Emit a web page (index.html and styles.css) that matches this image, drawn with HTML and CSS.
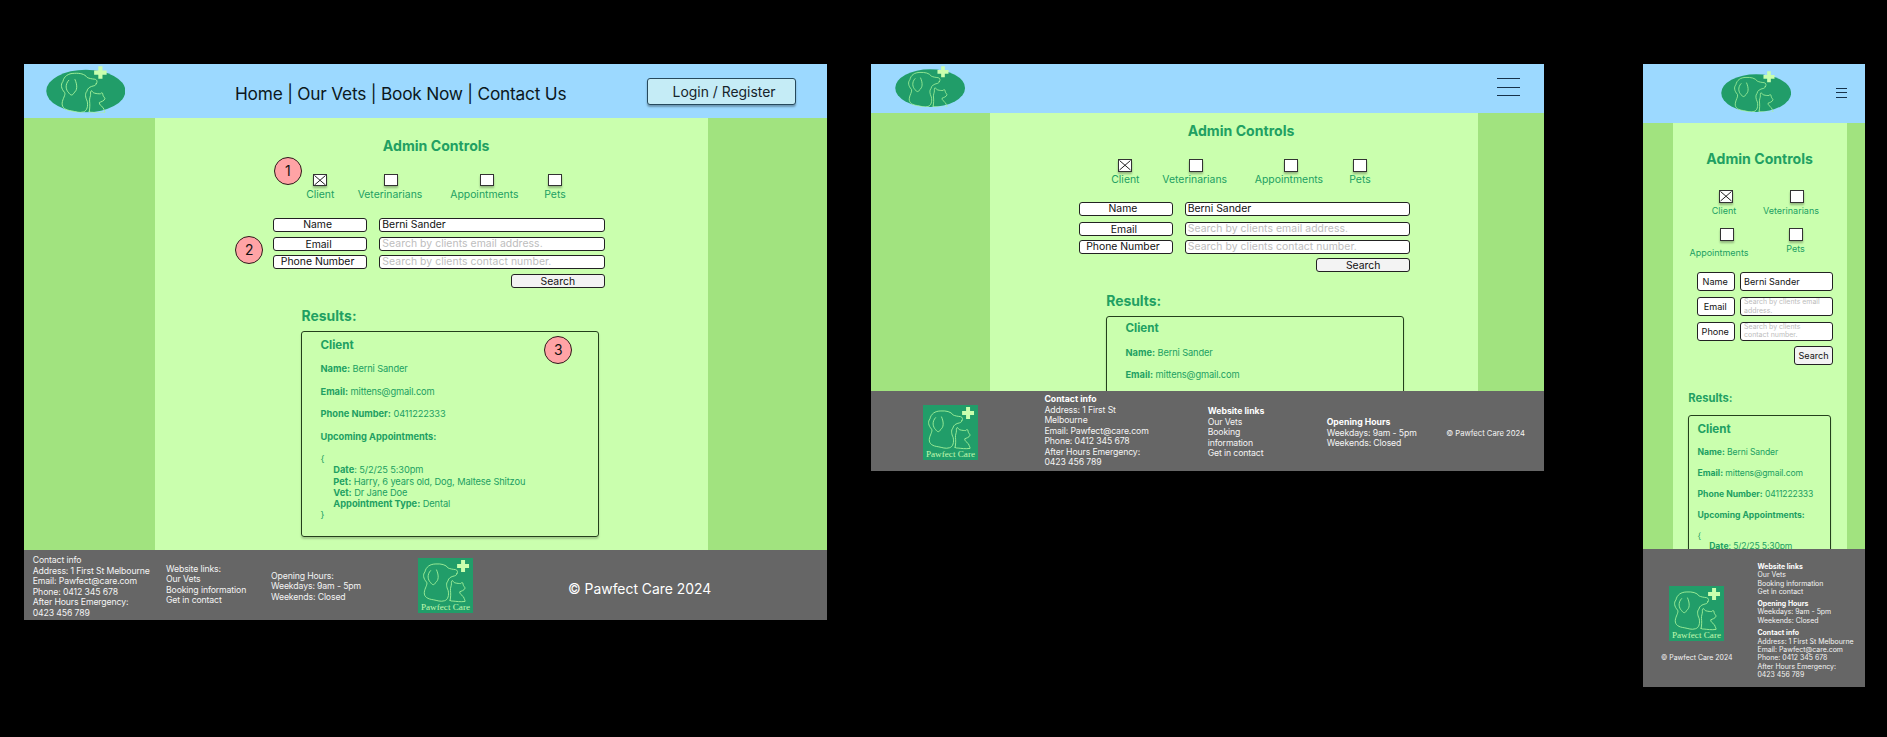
FILE: index.html
```html
<!DOCTYPE html>
<html lang="en">
<head>
<meta charset="utf-8">
<title>Pawfect Care – Admin Controls</title>
<link rel="stylesheet" href="styles.css">
</head>
<body>
<svg class="defs" width="0" height="0">
  <defs>
    <g id="pets" fill="none" stroke="#a8f59b" stroke-linejoin="round" stroke-linecap="round">
      <path d="M117 48C121 44 120 36 113 35C104 34 97 33 91 30C84 20 70 17 54 18C36 18 24 27 21 42C14 50 16 62 26 73C30 80 20 91 19 104C18 118 30 124 46 126C58 128 68 133 80 129C91 126 94 112 91 98C86 88 84 76 90 70C92 60 100 56 110 54C115 53 116 51 117 48Z"/>
      <path d="M38 38C26 50 30 67 38 74C43 82 49 83 53 74C62 68 64 54 56 36"/>
      <path d="M97 128C99 118 99 106 98 98C97 90 101 84 101 78C100 74 101 68 104 68C107 72 108 74 112 75C118 77 125 77 129 77C132 73 136 73 136 79C136 84 142 88 142 91C140 98 130 100 126 102C125 108 132 112 137 117C140 124 143 130 142 131C128 133 116 131 106 130C102 130 99 130 97 128Z"/>
    </g>
    <path id="plus" fill="#caffae" d="M130 6h12v12h12v12h-12v12h-12v-12h-12v-12h12z"/>
    <symbol id="badge" viewBox="0 0 240 141">
      <ellipse cx="120" cy="75.500" rx="119.500" ry="64.500" fill="#219d69"/>
      <g transform="translate(28.500 0) scale(1.050)" stroke-width="2.600">
        <use href="#pets" x="0" y="3"/>
        <use href="#plus" x="-7" y="-5"/>
      </g>
    </symbol>
    <symbol id="logo" viewBox="0 0 166 166">
      <rect width="166" height="166" fill="#219d69"/>
      <g stroke-width="2.600"><use href="#pets"/></g>
      <use href="#plus"/>
      <text x="83" y="157" text-anchor="middle" textLength="148" lengthAdjust="spacingAndGlyphs" font-family="'Liberation Serif', serif" font-size="28" fill="#c2fbb0">Pawfect Care</text>
    </symbol>
  </defs>
</svg>

<div class="board">
  <section class="frame desktop">
    <header class="top">
      <svg class="badge"><use href="#badge"/></svg>
      <nav class="nav">Home | Our Vets | Book Now | Contact Us</nav>
      <button class="login">Login / Register</button>
    </header>
    <main class="page">
      <div class="content">
        <h1 class="title">Admin Controls</h1>
        <div class="options">
          <div class="option"><i class="box"><svg viewBox="0 0 12 10.500"><path d="M.5.5l11 9.500M11.500.5L.5 10"/></svg></i><span>Client</span></div>
          <div class="option"><i class="box"></i><span>Veterinarians</span></div>
          <div class="option"><i class="box"></i><span>Appointments</span></div>
          <div class="option"><i class="box"></i><span>Pets</span></div>
        </div>
        <div class="form">
          <div class="key">Name</div><div class="value">Berni Sander</div>
          <div class="key email">Email</div><div class="value hint">Search by clients email address.</div>
          <div class="key">Phone Number</div><div class="value hint">Search by clients contact number.</div>
          <button class="search">Search</button>
        </div>
        <h2 class="results">Results:</h2>
        <div class="card">
          <h3>Client</h3>
          <p><b>Name:</b> Berni Sander</p>
          <p><b>Email:</b> mittens@gmail.com</p>
          <p><b>Phone Number:</b> 0411222333</p>
          <p><b>Upcoming Appointments:</b></p>
          <div>{</div>
          <div class="visit">
            <div><b>Date</b>: 5/2/25 5:30pm</div>
            <div><b>Pet:</b> Harry, 6 years old, Dog, Maltese Shitzou</div>
            <div><b>Vet:</b> Dr Jane Doe</div>
            <div><b>Appointment Type:</b> Dental</div>
          </div>
          <div>}</div>
        </div>
      </div>
    </main>
    <footer class="foot">
      <div class="contact">Contact info<br>Address: 1 First St Melbourne<br>Email: Pawfect@care.com<br>Phone: 0412 345 678<br>After Hours Emergency:<br>0423 456 789</div>
      <div class="links">Website links:<br>Our Vets<br>Booking information<br>Get in contact</div>
      <div class="hours">Opening Hours:<br>Weekdays: 9am - 5pm<br>Weekends: Closed</div>
      <svg class="logo"><use href="#logo"/></svg>
      <div class="copy">© Pawfect Care 2024</div>
    </footer>
    <span class="pin pin-one">1</span>
    <span class="pin pin-two">2</span>
    <span class="pin pin-three">3</span>
  </section>

  <section class="frame tablet">
    <header class="top">
      <svg class="badge"><use href="#badge"/></svg>
      <div class="menu"><i></i><i></i><i></i></div>
    </header>
    <main class="page">
      <div class="content">
        <h1 class="title">Admin Controls</h1>
        <div class="options">
          <div class="option"><i class="box"><svg viewBox="0 0 12 10.500"><path d="M.5.5l11 9.500M11.500.5L.5 10"/></svg></i><span>Client</span></div>
          <div class="option"><i class="box"></i><span>Veterinarians</span></div>
          <div class="option"><i class="box"></i><span>Appointments</span></div>
          <div class="option"><i class="box"></i><span>Pets</span></div>
        </div>
        <div class="form">
          <div class="key">Name</div><div class="value">Berni Sander</div>
          <div class="key email">Email</div><div class="value hint">Search by clients email address.</div>
          <div class="key">Phone Number</div><div class="value hint">Search by clients contact number.</div>
          <button class="search">Search</button>
        </div>
        <h2 class="results">Results:</h2>
        <div class="card">
          <h3>Client</h3>
          <p><b>Name:</b> Berni Sander</p>
          <p><b>Email:</b> mittens@gmail.com</p>
        </div>
      </div>
    </main>
    <footer class="foot">
      <svg class="logo"><use href="#logo"/></svg>
      <div class="contact"><b>Contact info</b><br>Address: 1 First St<br>Melbourne<br>Email: Pawfect@care.com<br>Phone: 0412 345 678<br>After Hours Emergency:<br>0423 456 789</div>
      <div class="links"><b>Website links</b><br>Our Vets<br>Booking<br>information<br>Get in contact</div>
      <div class="hours"><b>Opening Hours</b><br>Weekdays: 9am - 5pm<br>Weekends: Closed</div>
      <div class="copy">© Pawfect Care 2024</div>
    </footer>
  </section>

  <section class="frame mobile">
    <header class="top">
      <svg class="badge"><use href="#badge"/></svg>
      <div class="menu"><i></i><i></i><i></i></div>
    </header>
    <main class="page">
      <div class="content">
        <h1 class="title">Admin Controls</h1>
        <div class="options">
          <div class="option"><i class="box"><svg viewBox="0 0 12 10.500"><path d="M.5.5l11 9.500M11.500.5L.5 10"/></svg></i><span>Client</span></div>
          <div class="option"><i class="box"></i><span>Veterinarians</span></div>
          <div class="option"><i class="box"></i><span>Appointments</span></div>
          <div class="option"><i class="box"></i><span>Pets</span></div>
        </div>
        <div class="form">
          <div class="key">Name</div><div class="value">Berni Sander</div>
          <div class="key">Email</div><div class="value hint">Search by clients email<br>address.</div>
          <div class="key">Phone</div><div class="value hint">Search by clients<br>contact number.</div>
          <button class="search">Search</button>
        </div>
        <h2 class="results">Results:</h2>
        <div class="card">
          <h3>Client</h3>
          <p><b>Name:</b> Berni Sander</p>
          <p><b>Email:</b> mittens@gmail.com</p>
          <p><b>Phone Number:</b> 0411222333</p>
          <p><b>Upcoming Appointments:</b></p>
          <div>{</div>
          <div class="visit"><div><b>Date</b>: 5/2/25 5:30pm</div></div>
        </div>
      </div>
    </main>
    <footer class="foot">
      <div class="brand">
        <svg class="logo"><use href="#logo"/></svg>
        <div class="copy">© Pawfect Care 2024</div>
      </div>
      <div class="info">
        <div><b>Website links</b><br>Our Vets<br>Booking information<br>Get in contact</div>
        <div class="hours"><b>Opening Hours</b><br>Weekdays: 9am - 5pm<br>Weekends: Closed</div>
        <div class="contact"><b>Contact info</b><br>Address: 1 First St Melbourne<br>Email: Pawfect@care.com<br>Phone: 0412 345 678<br>After Hours Emergency:<br>0423 456 789</div>
      </div>
    </footer>
  </section>
</div>
</body>
</html>
```
FILE: styles.css
```css
* { box-sizing: border-box; }
body {
  margin: 0;
  background: #000;
  font-family: Inter, "Liberation Sans", sans-serif;
  overflow: hidden;
}
h1, h2, h3, p { margin: 0; }
button { font-family: inherit; padding: 0; }
.defs { display: none; }

.board {
  display: flex;
  align-items: flex-start;
  height: 737px;
  padding: 64px 0 0 24px;
}
.frame {
  position: relative;
  flex: none;
  display: flex;
  flex-direction: column;
  white-space: nowrap;
}
.top { flex: none; display: flex; background: #9cd9ff; }
.badge { flex: none; display: block; }
.page {
  flex: none;
  display: flex;
  background: #a1e37f;
  overflow: hidden;
}
.content {
  flex: none;
  background: #caffae;
  color: #21a062;
}
.foot {
  flex: none;
  display: flex;
  background: #666;
  color: #f4f4f4;
  font-size: 8.700px;
  line-height: 10.500px;
  letter-spacing: -.12px;
}
.foot b { color: #fff; letter-spacing: 0; }
.logo { flex: none; display: block; width: 55px; height: 55px; letter-spacing: 0; }

.title { font-size: 14.100px; line-height: 18px; font-weight: 700; text-align: center; }
.options { display: grid; font-size: 10.400px; line-height: 12px; }
.option { display: flex; flex-direction: column; align-items: center; }
.option span { display: block; }
.box {
  display: block;
  width: 14px;
  height: 12.500px;
  margin-bottom: 2.600px;
  background: #fff;
  border: 1px solid #333;
  box-shadow: 0 2px 2px rgba(0, 0, 0, .28);
}
.box svg { display: block; width: 12px; height: 10.500px; }
.box path { stroke: #222; stroke-width: 1; fill: none; }

.form {
  display: grid;
  grid-template-columns: 94px 225.500px;
  column-gap: 12px;
  font-size: 10.400px;
  line-height: 12px;
  color: #111;
}
.key, .value, .search {
  height: 14px;
  border: 1px solid #222;
  border-radius: 3px;
  background: #fff;
}
.key { text-align: center; padding-right: 5.500px; }
.key.email { padding: 1px 3.500px 0 0; }
.value { padding-left: 2px; }
.hint { color: #bdbdbd; }
.search {
  grid-column: 2;
  justify-self: end;
  width: 94px;
  background: #f3f3f3;
  font-size: inherit;
  line-height: 13px;
  color: #111;
}
.desktop .hint, .tablet .hint { letter-spacing: .06px; }
.results { font-size: 13.900px; line-height: 18px; font-weight: 700; }
.card {
  border: 1px solid #24401c;
  border-radius: 3px;
  font-size: 9.270px;
  line-height: 11.220px;
  letter-spacing: -.12px;
  box-shadow: 0 2px 2px rgba(0, 0, 0, .2);
}
.card b { letter-spacing: 0; }
.card h3 { font-size: 11.600px; line-height: 14px; margin-bottom: 11.300px; letter-spacing: 0; }
.card p { margin-bottom: 11.220px; }

.menu { display: flex; flex-direction: column; }
.menu i { display: block; height: 1px; background: #17324a; }

/* Desktop */
.desktop { width: 803px; }
.desktop .top { height: 54.300px; }
.desktop .badge { width: 79.700px; height: 46.700px; margin: 2.200px 0 0 21.800px; }
.desktop .nav { margin: 18.500px 0 0 109.500px; width: 333.500px; font-size: 17.300px; line-height: 22px; letter-spacing: -.22px; color: #0b1720; }
.desktop .login {
  width: 149.500px;
  height: 27px;
  margin: 14px 0 0 78.300px;
  padding-left: 5px;
  border: 1px solid #26495c;
  border-radius: 3px;
  background: #c5ecf6;
  box-shadow: 0 2px 2px rgba(0, 0, 0, .3);
  font-size: 13.900px;
  color: #16242b;
}
.desktop .page { height: 432.200px; padding-left: 131px; }
.desktop .content { width: 553px; padding-top: 19px; }
.desktop .title { width: 120px; margin-left: 221.200px; }
.desktop .options { grid-template-columns: 60px 79.400px 109.400px 31.800px; margin: 18.600px 0 0 135.300px; }
.desktop .option:nth-child(2) .box, .tablet .option:nth-child(2) .box { margin-left: 2px; }
.desktop .option:nth-child(3) .box, .tablet .option:nth-child(3) .box { margin-left: 4.600px; }
.desktop .form { margin: 16.700px 0 0 118.300px; }
.desktop .value, .tablet .value { margin-bottom: 4.300px; }
.desktop .value:nth-child(2), .tablet .value:nth-child(2) { margin-bottom: 5.400px; }
.desktop .results { margin: 19.300px 0 0 146.500px; }
.desktop .card { width: 298px; height: 206px; margin: 6.500px 0 0 146px; padding: 5.700px 0 0 18.500px; }
.visit { padding-left: 12.800px; }
.desktop .foot { height: 70px; }
.desktop .contact { margin: 5px 0 0 8.700px; width: 133.300px; }
.desktop .links { margin-top: 13.400px; width: 105px; }
.desktop .hours { margin-top: 20.500px; width: 147.500px; }
.desktop .logo { margin-top: 7.500px; }
.desktop .copy { margin: 30.300px 0 0 94.500px; font-size: 13.900px; line-height: 17px; letter-spacing: 0; color: #fff; }

.pin {
  position: absolute;
  width: 28px;
  height: 28px;
  border: 1px solid #2e1a1a;
  border-radius: 50%;
  background: #ffa3a5;
  color: #111;
  font-size: 13.900px;
  line-height: 26px;
  text-align: center;
}
.pin-one { left: 249.800px; top: 93px; }
.pin-two { left: 211.200px; top: 171.500px; }
.pin-three { left: 520.300px; top: 272.300px; }

/* Tablet */
.tablet { width: 672.500px; margin-left: 44.400px; }
.tablet .top { height: 49px; }
.tablet .badge { width: 70.300px; height: 41.200px; margin: 2.200px 0 0 24px; }
.tablet .menu { width: 23px; gap: 7.500px; margin: 14.300px 0 0 531.300px; }
.tablet .page { height: 278px; padding-left: 119px; }
.tablet .content { width: 487.600px; padding-top: 9px; }
.tablet .title { width: 120px; margin-left: 190.700px; }
.tablet .options { grid-template-columns: 60px 78.600px 110px 32px; margin: 19.200px 0 0 105px; }
.tablet .form { margin: 16.100px 0 0 88.300px; }
.tablet .results { margin: 19.200px 0 0 115.800px; }
.tablet .card { width: 298px; height: 206px; margin: 6.700px 0 0 115.600px; padding: 4.200px 0 0 18.500px; }
.tablet .foot { height: 80px; }
.tablet .logo { margin: 14px 0 0 51.300px; }
.tablet .contact { margin: 3px 0 0 66.700px; width: 163.300px; }
.tablet .links { margin-top: 15px; width: 119px; }
.tablet .hours { margin-top: 26.300px; width: 119.500px; }
.tablet .copy { margin-top: 37.700px; font-size: 7.650px; letter-spacing: 0; }

/* Mobile */
.mobile { width: 222px; margin-left: 99.100px; }
.mobile .top { height: 59px; }
.mobile .badge { width: 70.300px; height: 41.200px; margin: 7px 0 0 78px; }
.mobile .menu { width: 11px; gap: 3.700px; margin: 23.800px 0 0 44.700px; }
.mobile .page { height: 426.200px; padding-left: 30px; }
.mobile .content { width: 174.500px; padding-top: 27.300px; }
.mobile .title { width: 120px; margin-left: 26.700px; }
.mobile .options {
  grid-template-columns: 63px 72px;
  row-gap: 11.300px;
  margin: 21.800px 0 0 19.500px;
  font-size: 9px;
}
.mobile .box { margin-bottom: 2.300px; }
.mobile .option:nth-child(1) .box { margin-left: 4px; }
.mobile .option:nth-child(2) .box { margin-left: 11px; }
.mobile .option:nth-child(2) span { margin-left: -1px; }
.mobile .option:nth-child(3) .box { margin: 0 0 6.500px 6px; }
.mobile .option:nth-child(3) span { margin-left: -10px; }
.mobile .option:nth-child(4) .box { margin-left: 9px; }
.mobile .option:nth-child(4) span { margin-left: 8px; }
.mobile .form {
  grid-template-columns: 38.500px 93px;
  column-gap: 4.600px;
  margin: 13px 0 0 24px;
  font-size: 9.100px;
  line-height: 17px;
}
.mobile .key, .mobile .value, .mobile .search { height: 19px; }
.mobile .key { padding-right: 2px; }
.mobile .value { padding-left: 3px; margin-bottom: 5.400px; }
.mobile .value:nth-child(2) { margin-bottom: 6.300px; }
.mobile .hint { font-size: 6.950px; line-height: 8.400px; }
.mobile .search { width: 39px; line-height: 17px; }
.mobile .results { margin: 24px 0 0 15.300px; font-size: 11.200px; }
.mobile .card {
  width: 143px;
  height: 200px;
  margin: 8px 0 0 15px;
  padding: 5.500px 0 0 8.500px;
  font-size: 8.580px;
  line-height: 10.500px;
}
.mobile .card h3 { margin-bottom: 11px; }
.mobile .card p { margin-bottom: 10.500px; }
.mobile .visit { padding-left: 11.700px; }
.mobile .foot { height: 138px; font-size: 6.950px; line-height: 8.400px; letter-spacing: 0; }
.mobile .foot .brand { width: 114.500px; padding: 36.500px 0 0 26.300px; }
.mobile .brand .copy { margin: 13.300px 0 0 0; width: 55px; display: flex; justify-content: center; }
.mobile .info { padding-top: 13.500px; }
.mobile .hours { margin-top: 3.400px; }
.mobile .contact { margin-top: 4.200px; }
```
